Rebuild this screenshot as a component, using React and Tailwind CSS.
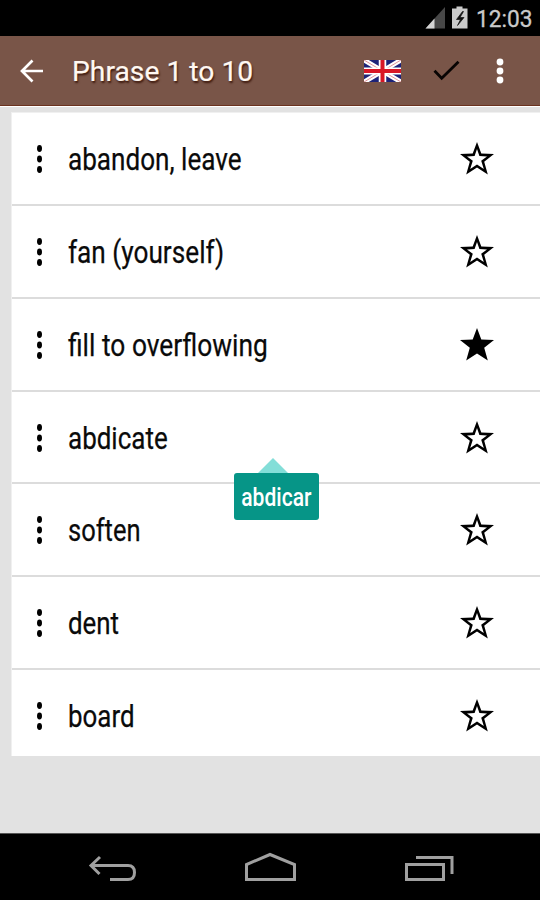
import React from "react";

const phrases = [
  { text: "abandon, leave", height: "h-[93px]", width: "scale-x-[0.842]" },
  { text: "fan (yourself)", height: "h-[93px]", width: "scale-x-[0.845]" },
  { text: "fill to overflowing", height: "h-[93px]", width: "scale-x-[0.85]", starred: true },
  { text: "abdicate", height: "h-[92px]", width: "scale-x-[0.838]" },
  { text: "soften", height: "h-[93px]", width: "scale-x-[0.822]" },
  { text: "dent", height: "h-[93px]", width: "scale-x-[0.835]" },
  { text: "board", height: "h-[86px]", width: "scale-x-[0.835]" },
];

const STAR_OUTER =
  "M18 0L22.300 11.600L35 12L25.200 19.700L28.800 32.500L18 25.500L7.200 32.500L10.800 19.700L1 12L13.700 11.600Z";
const STAR_INNER =
  "M18 7L20.400 14L28 14.500L22.200 18.700L24.800 27L18 22.500L11.200 27L13.800 18.700L8 14.500L15.600 14Z";

function StatusBar() {
  return (
    <div className="flex h-9 items-center bg-black">
      <svg className="ml-[425px] h-9 w-[46px] shrink-0" viewBox="0 0 46 36">
        <path d="M0.5 28.5L20 7v21.500Z" fill="#484848" />
        <path d="M0.500 28.500L9.500 18.500v10Z" fill="#d4d4d4" />
        <path d="M31.500 6.500h6v2h5v20h-15.500v-20h4.500Z" fill="#cbcbcb" />
        <path d="M37.500 11.500l-6 8h4l-3 6 6.500-8h-4l3.500-6Z" fill="#111" stroke="#111" strokeWidth="0.700" />
      </svg>
      <span className="mt-[3px] ml-[5px] inline-block origin-left scale-x-[0.965] text-[23.500px] leading-none whitespace-nowrap text-[#cacaca] [-webkit-text-stroke:0.3px_#cacaca]">
        12:03
      </span>
    </div>
  );
}

function Flag() {
  return (
    <svg className="h-[22px] w-[37px]" viewBox="0 0 37 23" preserveAspectRatio="none">
      <rect width="37" height="23" fill="#1d2379" />
      <path d="M0 0L37 23M37 0L0 23" stroke="#fff" strokeWidth="5" />
      <path d="M0 0L37 23M37 0L0 23" stroke="#d7747f" strokeWidth="0.800" />
      <path d="M18.500 0v23M0 11.500h37" stroke="#fff" strokeWidth="7.500" />
      <path d="M18.500 0v23M0 11.500h37" stroke="#d81626" strokeWidth="4" />
    </svg>
  );
}

function AppBar() {
  return (
    <div className="flex h-[70px] items-center border-b border-[#6b321f] bg-[#795548]">
      <svg className="ml-5 h-6 w-6 shrink-0" viewBox="0 0 24 24" fill="none" stroke="#fff" strokeWidth="2.700">
        <path d="M23 12H3M12.500 1.500L2 12l10.500 10.500" />
      </svg>
      <div className="mt-1 ml-7 w-[292px] shrink-0">
        <span className="inline-block origin-left scale-x-[1.01] text-[28px] leading-none whitespace-nowrap text-[#fff8f2] [-webkit-text-stroke:0.2px_#fff8f2] [text-shadow:1px_2px_2px_#3c170b]">
          Phrase 1 to 10
        </span>
      </div>
      <Flag />
      <svg className="ml-[32px] h-[22px] w-[28px]" viewBox="0 0 28 22" fill="none" stroke="#080403" strokeWidth="2.800">
        <path d="M1.500 10.800L8.700 18.200 25.500 1.800" />
      </svg>
      <svg className="ml-[35px] h-[26px] w-2" viewBox="0 0 8 26" fill="#fff">
        <circle cx="4" cy="4" r="3.400" />
        <circle cx="4" cy="13" r="3.400" />
        <circle cx="4" cy="22" r="3.400" />
      </svg>
    </div>
  );
}

function Star({ filled }) {
  return (
    <svg className="h-[34px] w-[36px]" viewBox="0 0 36 34">
      <path d={filled ? STAR_OUTER : STAR_OUTER + STAR_INNER} fillRule="evenodd" fill="#000" />
    </svg>
  );
}

function PhraseRow({ phrase, last }) {
  return (
    <div className={`${phrase.height} ${last ? "" : "border-b-2 border-[#dcdcdc]"} flex items-start`}>
      <svg className="mt-[31px] ml-6 h-[30px] w-[7px] shrink-0" viewBox="0 0 7 30">
        <ellipse cx="3.500" cy="4.500" rx="2.500" ry="3.400" />
        <ellipse cx="3.500" cy="15" rx="2.500" ry="3.400" />
        <ellipse cx="3.500" cy="25.500" rx="2.500" ry="3.400" />
      </svg>
      <div className="mt-[27px] ml-[25px] w-[391px] shrink-0">
        <span
          className={`${phrase.width} inline-block origin-left text-[31px] leading-[40px] whitespace-nowrap text-[#0a0a0a] [-webkit-text-stroke:0.25px_#0a0a0a]`}
        >
          {phrase.text}
        </span>
      </div>
      <div className="mt-[29px]">
        <Star filled={phrase.starred} />
      </div>
    </div>
  );
}

function Tooltip() {
  return (
    <div className="absolute top-[458px] left-[234px] flex w-[85px] flex-col">
      <svg className="ml-[24px] h-[15px] w-[30px]" viewBox="0 0 30 15">
        <path d="M15 0L30 15H0Z" fill="#83ded8" />
      </svg>
      <div className="flex h-[47px] items-center justify-center rounded-[3px] bg-[#069587]">
        <span className="mt-px scale-x-[0.81] text-[26px] leading-none font-medium whitespace-nowrap text-white">abdicar</span>
      </div>
    </div>
  );
}

function NavBar() {
  return (
    <div className="flex h-[67px] items-start border-t border-[#555] bg-black">
      <svg className="mt-[21px] ml-[88px] h-[30px] w-[50px]" viewBox="0 0 50 30" fill="none" stroke="#a0a0a0" strokeWidth="3">
        <path d="M12 2L3 10.500 11.500 19M3 10.500H40C45 10.500 46.500 13.500 46.500 17.500S45 24.500 40 24.500H22" />
      </svg>
      <svg className="mt-[18px] ml-[106px] h-[32px] w-[54px]" viewBox="0 0 54 32" fill="none" stroke="#a0a0a0" strokeWidth="3">
        <path d="M2.500 27.500V12.500L26 2.500 50.500 12.500V27.500Z" />
      </svg>
      <svg className="mt-5 ml-[106px] h-[30px] w-[52px]" viewBox="0 0 52 30" fill="none" stroke="#a0a0a0" strokeWidth="3">
        <path d="M2.500 10.500H39.500V25.500H2.500ZM12 3.500H48V20" />
      </svg>
    </div>
  );
}

export default function App() {
  return (
    <div className="relative flex h-[900px] w-[540px] flex-col overflow-hidden bg-[#e2e2e2] font-[Roboto,sans-serif]">
      <StatusBar />
      <AppBar />
      <div className="flex-1 border-t border-white pt-[5px] pl-[11px]">
        <div className="border-t border-l border-[#f0f0f0] bg-white">
          {phrases.map((phrase, i) => (
            <PhraseRow key={phrase.text} phrase={phrase} last={i === phrases.length - 1} />
          ))}
        </div>
      </div>
      <NavBar />
      <Tooltip />
    </div>
  );
}
